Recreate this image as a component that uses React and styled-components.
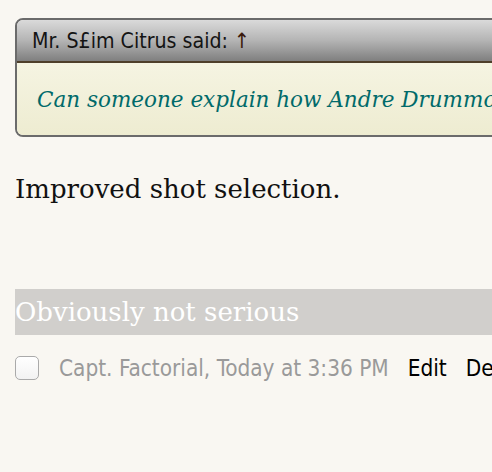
import React from "react";
import styled, { createGlobalStyle } from "styled-components";

const Global = createGlobalStyle`
  html, body { margin: 0; padding: 0; background: #f9f7f2; overflow: hidden; }
  body { width: 492px; height: 472px; }
`;

const Page = styled.div`
  width: 900px;
  padding: 18px 0 0 15px;
`;

const Quote = styled.div`
  width: 820px;
  border: 2px solid #6b6b6b;
  border-radius: 8px;
  overflow: hidden;
`;

const QuoteHeader = styled.div`
  height: 41px;
  display: flex;
  align-items: center;
  padding: 0 15px;
  background: linear-gradient(to bottom, #dadada 0%, #b4b4b4 50%, #7f7f7f 100%);
  border-bottom: 2px solid #4e3f2a;
  font-family: "DejaVu Sans Condensed", "DejaVu Sans", sans-serif;
  font-size: 21.2px;
  color: #141414;
`;

const Arrow = styled.span`
  color: #3a1a0a;
  margin-left: 6px;
`;

const QuoteBody = styled.div`
  height: 72px;
  display: flex;
  align-items: center;
  padding: 0 20px;
  background: linear-gradient(to bottom, #f5f4e2, #eeecd1);
  font-family: "DejaVu Serif", serif;
  font-style: italic;
  font-size: 21.5px;
  color: #006a6a;
  white-space: nowrap;
`;

const Message = styled.p`
  margin: 37px 0 0;
  font-family: "DejaVu Serif", serif;
  font-size: 26px;
  color: #111;
`;

const TitleBar = styled.div`
  margin-top: 85px;
  height: 46px;
  display: flex;
  align-items: center;
  background: #d1cfcc;
  font-family: "DejaVu Serif", serif;
  font-size: 26px;
  color: #fff;
`;

const Meta = styled.div`
  margin-top: 20px;
  display: flex;
  align-items: center;
  font-family: "DejaVu Sans Condensed", "DejaVu Sans", sans-serif;
  font-size: 22.4px;
  white-space: nowrap;
`;

const Check = styled.span`
  width: 22px;
  height: 22px;
  border: 1px solid #aaa;
  border-radius: 5px;
  background: linear-gradient(to bottom, #fff, #f2f2f2);
  flex: none;
`;

const Author = styled.span`
  color: #9a9a9a;
  margin-left: 20px;
`;

const Action = styled.span`
  color: #000;
  margin-left: 19px;
`;

export default function App() {
  return (
    <>
      <Global />
      <Page>
        <Quote>
          <QuoteHeader>
            Mr. S£im Citrus said:<Arrow>↑</Arrow>
          </QuoteHeader>
          <QuoteBody>Can someone explain how Andre Drummond is such a good shooter now?</QuoteBody>
        </Quote>
        <Message>Improved shot selection.</Message>
        <TitleBar>Obviously not serious</TitleBar>
        <Meta>
          <Check />
          <Author>Capt. Factorial, Today at 3:36 PM</Author>
          <Action>Edit</Action>
          <Action>Delete</Action>
        </Meta>
      </Page>
    </>
  );
}
